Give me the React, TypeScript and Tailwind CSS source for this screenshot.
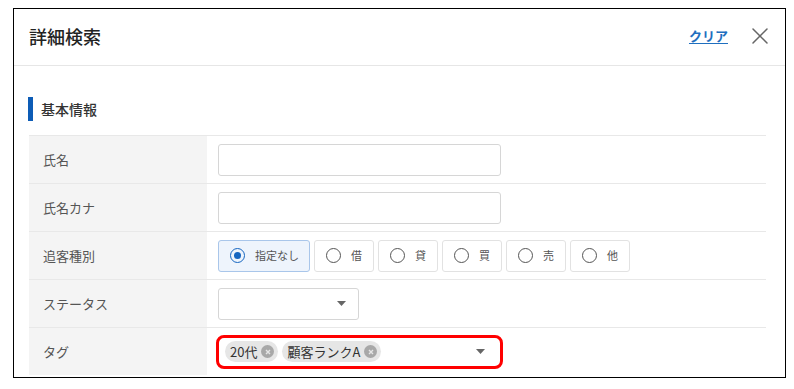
import { X } from 'lucide-react';

const font = { fontFamily: '"Noto Sans CJK JP", "Noto Sans", sans-serif' };

function Caret() {
  return (
    <svg width="9" height="5" viewBox="0 0 9 5" className="shrink-0">
      <path d="M0 0 L9 0 L4.5 5 Z" fill="#666" />
    </svg>
  );
}

function Radio({ label, checked }: { label: string; checked?: boolean }) {
  return (
    <div
      className={
        checked
          ? 'flex items-center gap-[10px] h-[32px] w-[92px] pl-[11px] rounded-[3px] border border-[#a9c6ea] bg-[#eef4fc]'
          : 'flex items-center gap-[10px] h-[32px] w-[60px] pl-[11px] rounded-[3px] border border-[#e2e2e2] bg-white'
      }
    >
      <span
        className={
          checked
            ? 'flex items-center justify-center w-[15px] h-[15px] rounded-full border-[1.5px] border-[#1565c0]'
            : 'w-[15px] h-[15px] rounded-full border-[1.5px] border-[#555]'
        }
      >
        {checked && <span className="w-[7px] h-[7px] rounded-full bg-[#1565c0]" />}
      </span>
      <span className="text-[11px] text-[#555]">{label}</span>
    </div>
  );
}

function Chip({ label }: { label: string }) {
  return (
    <span className="flex items-center gap-[4px] h-[21px] pl-[5px] pr-[4px] rounded-full bg-[#e6e6e6] text-[13px] text-[#333]">
      {label}
      <span className="flex items-center justify-center w-[13px] h-[13px] rounded-full bg-[#a8a8a8]">
        <svg width="6" height="6" viewBox="0 0 6 6">
          <path d="M1 1 L5 5 M5 1 L1 5" stroke="#e6e6e6" strokeWidth="1.4" />
        </svg>
      </span>
    </span>
  );
}

function Row({ label, children }: { label: string; children: React.ReactNode }) {
  return (
    <div className="flex h-[48px] border-t border-[#e8e8e8]">
      <div className="w-[178px] bg-[#f4f4f4] flex items-center pl-[14px] text-[13px] text-[#555]">
        {label}
      </div>
      <div className="flex-1 flex items-center pl-[11px]">{children}</div>
    </div>
  );
}

export default function App() {
  return (
    <div className="w-[794px] h-[389px] bg-white pt-[8px] pl-[13px] overflow-hidden" style={font}>
      <div className="w-[773px] h-[370px] border border-black overflow-hidden bg-white">
        <div className="flex items-center h-[57px] border-b border-[#e6e6e6] pl-[15px] pr-[11px]">
          <h1 className="text-[18px] font-medium text-[#222] flex-1 -mt-[2px]">詳細検索</h1>
          <a className="text-[13px] font-bold text-[#1f6fbf] underline underline-offset-2 mr-[18px] -mt-[2px]">
            クリア
          </a>
          <X size={28} strokeWidth={1.3} color="#666" className="-mt-[2px]" />
        </div>
        <div className="pl-[14px] pr-[18px]">
          <div className="flex items-center mt-[31px] h-[24px]">
            <span className="w-[5px] h-[24px] bg-[#0d5cb6]" />
            <span className="ml-[8px] text-[14px] font-medium text-[#333]">基本情報</span>
          </div>
          <div className="mt-[14px] ml-[1px] w-[737px]">
            <Row label="氏名">
              <div className="w-[283px] h-[32px] rounded-[3px] border border-[#d6d6d6] bg-white" />
            </Row>
            <Row label="氏名カナ">
              <div className="w-[283px] h-[32px] rounded-[3px] border border-[#d6d6d6] bg-white" />
            </Row>
            <Row label="追客種別">
              <div className="flex gap-[4px]">
                <Radio label="指定なし" checked />
                <Radio label="借" />
                <Radio label="貸" />
                <Radio label="買" />
                <Radio label="売" />
                <Radio label="他" />
              </div>
            </Row>
            <Row label="ステータス">
              <div className="w-[141px] h-[32px] rounded-[3px] border border-[#d6d6d6] bg-white flex items-center justify-end pr-[12px]">
                <Caret />
              </div>
            </Row>
            <Row label="タグ">
              <div className="-ml-[2px] w-[287px] h-[34px] rounded-[8px] border-[3px] border-[#f00] bg-white flex items-center pl-[6px] pr-[15px] gap-[4px]">
                <Chip label="20代" />
                <Chip label="顧客ランクA" />
                <span className="flex-1" />
                <Caret />
              </div>
            </Row>
          </div>
        </div>
      </div>
    </div>
  );
}
